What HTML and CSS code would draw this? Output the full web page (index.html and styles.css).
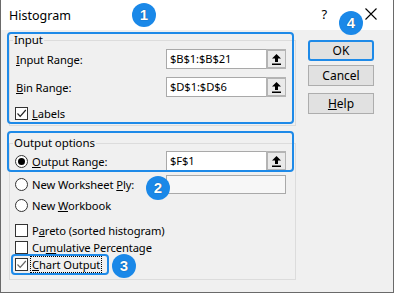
FILE: index.html
```html
<!DOCTYPE html>
<html lang="en">
<head>
	<meta charset="UTF-8">
	<title>Histogram</title>
<link rel="stylesheet" href="styles.css">
</head>
<body>
<div class='dialog'>
	<div class='titlebar'>
		<span class='title'>Histogram</span>
		<span class='tb-help'>?</span>
		<span class='tb-close'>
			<svg width='12' height='12' viewBox='0 0 12 12'><path d='M0.5 0.5 L11.5 11.5 M11.5 0.5 L0.5 11.5' stroke='#000' stroke-width='1.1'/></svg>
		</span>
	</div>
	<div class='content'>
		<div class='main'>
			<fieldset class='group group-input'>
				<legend>Input</legend>
				<div class='row field-row'>
					<span class='lbl'><u>I</u>nput Range:</span>
					<div class='ref'><span class='ref-text'>$B$1:$B$21</span><span class='ref-btn'><svg width='9' height='11' viewBox='0 0 9 11'><path d='M4.5 0 L9 4.5 H6 V8 H3 V4.5 H0 Z' fill='#000'/><rect x='0' y='9.5' width='9' height='1.5' fill='#000'/></svg></span></div>
				</div>
				<div class='row field-row row-gap'>
					<span class='lbl'><u>B</u>in Range:</span>
					<div class='ref'><span class='ref-text'>$D$1:$D$6</span><span class='ref-btn'><svg width='9' height='11' viewBox='0 0 9 11'><path d='M4.5 0 L9 4.5 H6 V8 H3 V4.5 H0 Z' fill='#000'/><rect x='0' y='9.5' width='9' height='1.5' fill='#000'/></svg></span></div>
				</div>
				<div class='row opt-row row-gap'>
					<span class='box checked'><svg width='11' height='11' viewBox='0 0 11 11'><path d='M1.5 5.5 L4.2 8.3 L9.8 2' stroke='#222' stroke-width='1.2' fill='none'/></svg></span>
					<span class='opt-text'><u>L</u>abels</span>
				</div>
			</fieldset>

			<fieldset class='group group-output'>
				<legend>Output options</legend>
				<div class='row field-row'>
					<span class='lbl lbl-opt'><span class='radio on'></span><span class='opt-text'><u>O</u>utput Range:</span></span>
					<div class='ref'><span class='ref-text'>$F$1</span><span class='ref-btn'><svg width='9' height='11' viewBox='0 0 9 11'><path d='M4.5 0 L9 4.5 H6 V8 H3 V4.5 H0 Z' fill='#000'/><rect x='0' y='9.5' width='9' height='1.5' fill='#000'/></svg></span></div>
				</div>
				<div class='row field-row row-ply'>
					<span class='lbl lbl-opt'><span class='radio'></span><span class='opt-text'>New Worksheet <u>P</u>ly:</span></span>
					<div class='ref ref-off'></div>
				</div>
				<div class='row opt-row row-book'>
					<span class='radio'></span>
					<span class='opt-text'>New <u>W</u>orkbook</span>
				</div>
				<div class='row opt-row row-pareto'>
					<span class='box'></span>
					<span class='opt-text'>P<u>a</u>reto (sorted histogram)</span>
				</div>
				<div class='row opt-row'>
					<span class='box'></span>
					<span class='opt-text'>Cu<u>m</u>ulative Percentage</span>
				</div>
				<div class='row opt-row'>
					<span class='box checked'><svg width='11' height='11' viewBox='0 0 11 11'><path d='M1.5 5.5 L4.2 8.3 L9.8 2' stroke='#666' stroke-width='1.2' fill='none'/></svg></span>
					<span class='opt-text focus'><u>C</u>hart Output</span>
				</div>
			</fieldset>
		</div>

		<div class='side'>
			<div class='btn btn-ok'>OK</div>
			<div class='btn'>Cancel</div>
			<div class='btn btn-help'><u>H</u>elp</div>
		</div>
	</div>

	<!-- callouts drawn over the dialog -->
	<div class='hl hl-input'></div>
	<div class='hl hl-output'></div>
	<div class='hl hl-chart'></div>
	<span class='badge badge-1'>1</span>
	<span class='badge badge-2'>2</span>
	<span class='badge badge-3'>3</span>
	<span class='badge badge-4'>4</span>
</div>
</body>
</html>
```

FILE: styles.css
```css
body{
	margin:0;
	background:#fff;
}
.dialog{
	position:relative;
	width:394px;height:293px;
	box-sizing:border-box;
	border:1px solid #6a6a6a;
	border-top:none;
	background:#f0f0f0;
	font-family:"Noto Sans","Liberation Sans",sans-serif;
	font-size:11.2px;
	letter-spacing:-0.1px;
	color:#000;
	overflow:hidden;
}

/* title bar */
.titlebar{
	display:flex;
	align-items:center;
	height:30px;
	background:#fff;
	padding-left:8px;
}
.title{
	font-size:12.5px;
	letter-spacing:0;
	margin-top:1px;
}
.tb-help{
	margin-left:auto;
	font-size:13px;
	margin-top:-2px;
}
.tb-close{
	display:flex;
	margin-left:38px;
	margin-right:16px;
	margin-top:-2px;
}

.content{
	display:flex;
}
.main{
	padding:3px 0 0 8px;
	width:287px;
}

/* group boxes */
.group{
	margin:0;
	border:1px solid #dcdcdc;
	padding:2px 9px 3px 3px;
}
.group legend{
	padding:0 1px;
	line-height:14px;
	font-size:11.5px;
}
.group-output{
	margin-top:10px;
	padding-top:1px;
	padding-bottom:6px;
}
.row{
	display:flex;
	align-items:center;
	margin-left:2px;
}
.row-gap{
	margin-top:8px;
}
.row-ply{
	margin-top:3px;
}
.row-book{
	margin-top:3px;
}
.row-pareto{
	margin-top:8px;
}
.field-row{
	height:20px;
}
.opt-row{
	height:17px;
}
.lbl{
	width:151px;
	padding-left:1px;
	box-sizing:border-box;
}
.lbl-opt{
	display:flex;
	align-items:center;
	padding-left:0;
}
.opt-text{
	margin-left:4px;
	line-height:15px;
}
.focus{
	outline:1px dotted #000;
	outline-offset:0;
	padding:0 1px;
	margin-left:3px;
}

/* reference boxes */
.ref{
	display:flex;
	width:120px;height:20px;
	box-sizing:border-box;
	border:1px solid #a9a9a9;
	background:#fff;
}
.ref-text{
	flex:1;
	padding-left:3px;
	line-height:18px;
}
.ref-btn{
	display:flex;
	align-items:center;
	justify-content:center;
	width:20px;
	box-sizing:border-box;
	border:2px solid #b4b4b4;
	border-right:1px solid #b4b4b4;
	background:#eaeaea;
	margin:-1px -1px -1px 0;
	height:20px;
}
.ref-off{
	background:#f7f7f7;
	height:19px;
}

/* check boxes and radios */
.box,.radio{
	display:inline-flex;
	align-items:center;
	justify-content:center;
	width:13px;height:13px;
	box-sizing:border-box;
	border:1px solid #333;
	background:#fff;
	flex:none;
}
.radio{
	border-radius:50%;
}
.radio.on:after{
	content:'';
	width:7px;height:7px;
	border-radius:50%;
	background:#000;
}

/* buttons */
.side{
	display:flex;
	flex-direction:column;
	margin-left:12px;
	padding-top:10px;
}
.btn{
	width:66px;height:21px;
	box-sizing:border-box;
	border:1px solid #adadad;
	background:#e1e1e1;
	text-align:center;
	line-height:19px;
	font-size:12px;
	letter-spacing:0;
}
.btn + .btn{
	margin-top:4px;
}
.btn-ok{
	border:2px solid #1e8ae8;
	border-radius:3px;
	line-height:17px;
}
.btn.btn-help{
	margin-top:7px;
}

/* callouts */
.hl{
	position:absolute;
	border:2px solid #1e8ae8;
	border-radius:4px;
	box-sizing:border-box;
}
.hl-input{
	left:6px;top:32px;
	width:287px;height:92px;
}
.hl-output{
	left:6px;top:131px;
	width:287px;height:41px;
}
.hl-chart{
	left:10px;top:254px;
	width:98px;height:21px;
}
.badge{
	position:absolute;
	width:24px;height:24px;
	border-radius:50%;
	background:#1a88e8;
	color:#fff;
	font-family:"Liberation Sans",sans-serif;
	font-weight:bold;
	font-size:15px;
	line-height:24px;
	text-align:center;
	letter-spacing:0;
	text-shadow:0 0 1px #00345f;
}
.badge-1{ left:131px; top:3px; }
.badge-2{ left:145px; top:176px; }
.badge-3{ left:111px; top:254px; }
.badge-4{ left:338px; top:11px; }
```
